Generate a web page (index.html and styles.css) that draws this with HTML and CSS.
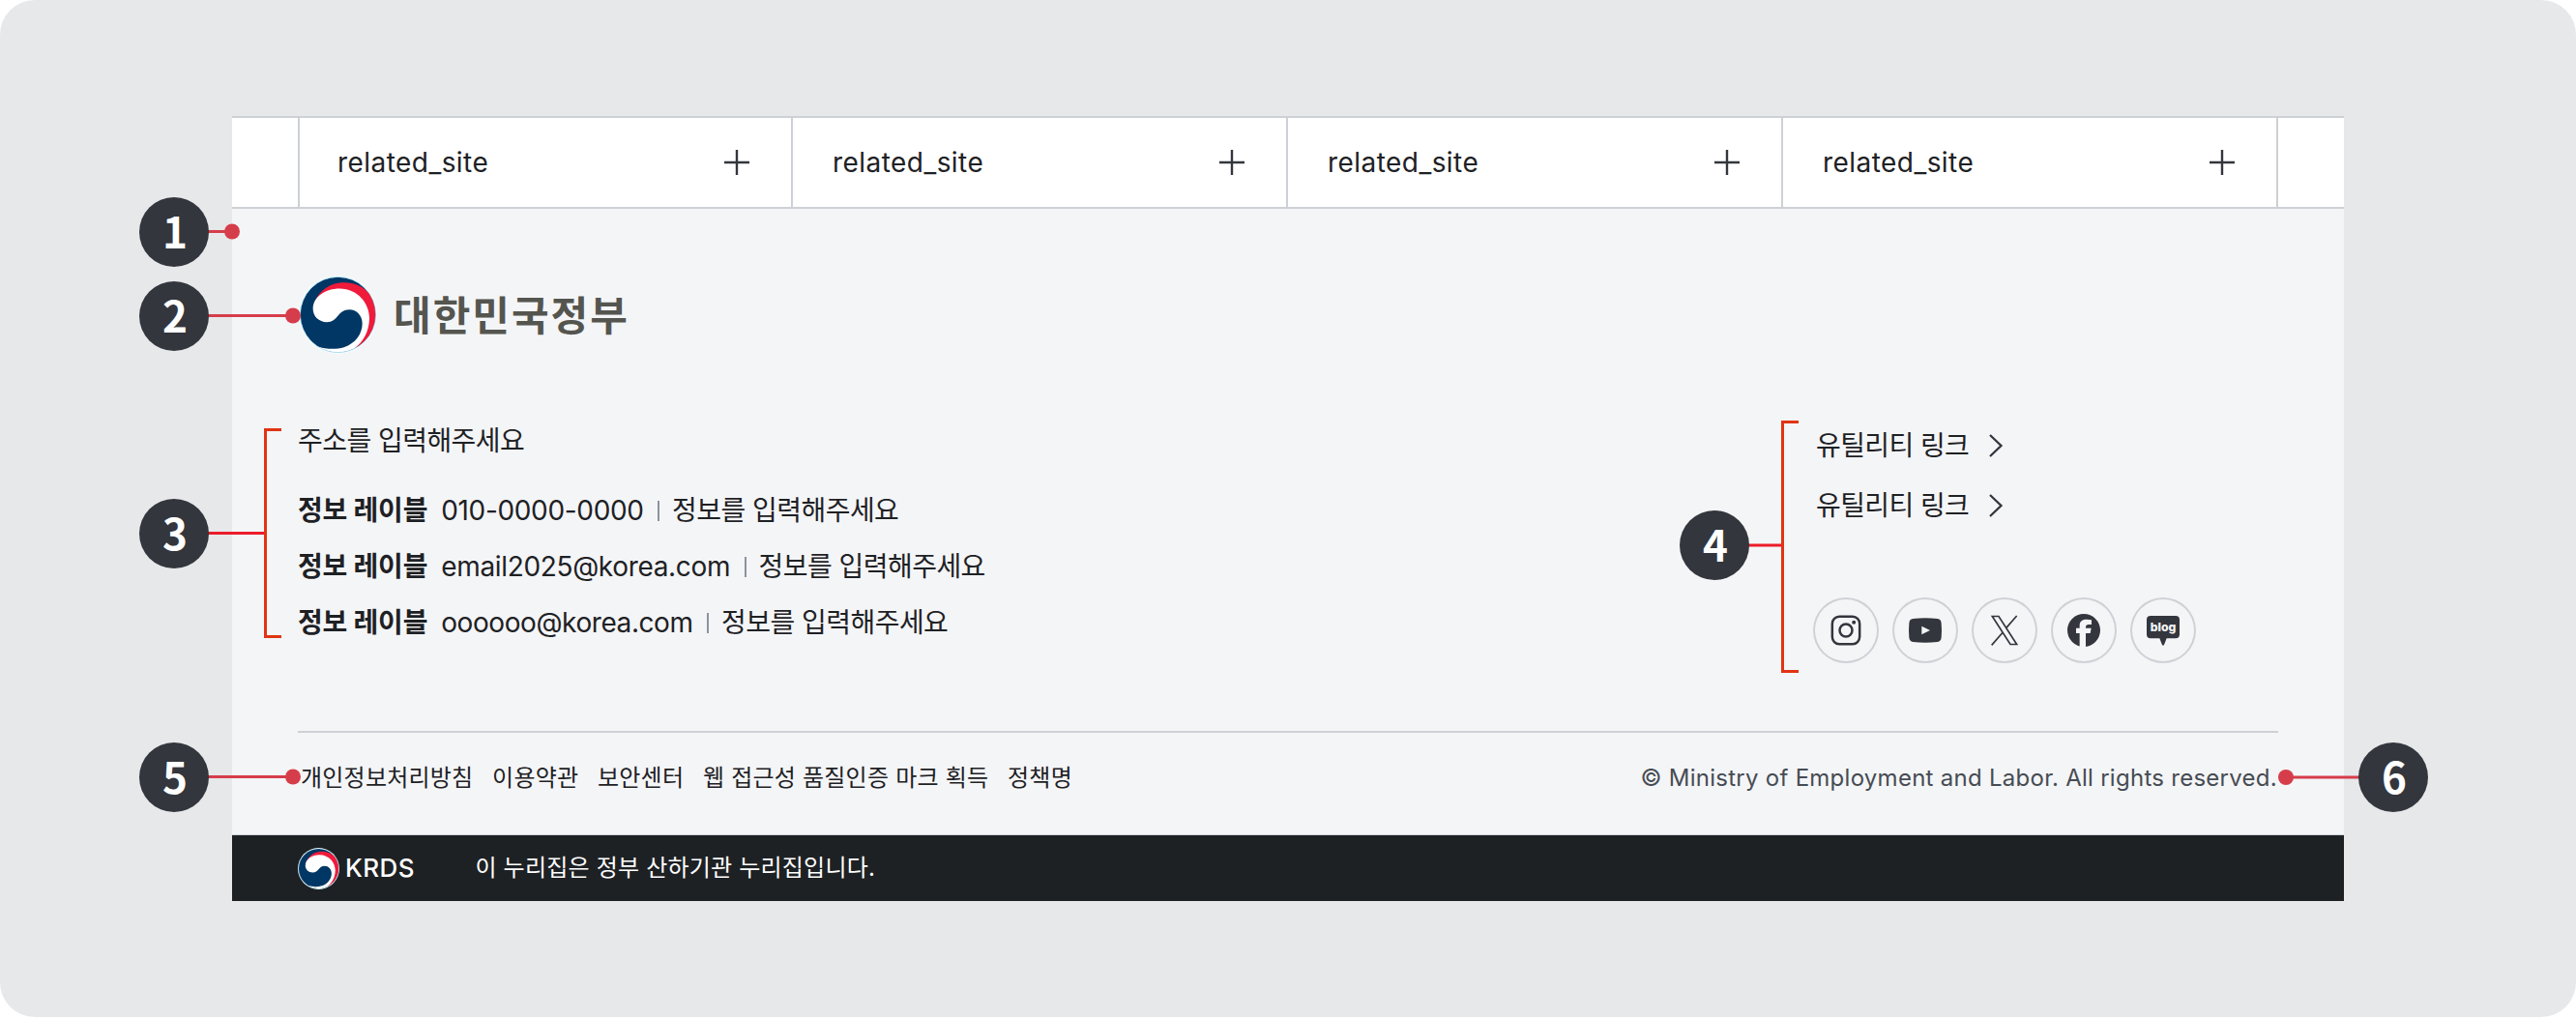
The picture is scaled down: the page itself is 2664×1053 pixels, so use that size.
FILE: index.html
```
<!DOCTYPE html>
<html lang="ko">
<head>
<meta charset="utf-8">
<title>Footer anatomy</title>
<link rel="stylesheet" href="styles.css">
</head>
<body>
<svg class="defs" aria-hidden="true">
  <symbol id="emblem" viewBox="28 41.5 243 243">
    <circle cx="149.500" cy="163" r="121" fill="#fff"/>
    <circle cx="149.500" cy="163" r="116.500" fill="#003764"/>
    <path d="M73 140C82 93 122 63 168 63C202 63 232 77 247 98A117 117 0 0 1 200 268C226 240 240 210 240 175C240 130 205 92 154 92C120 92 90 110 80 140Z" fill="#f01a3b"/>
    <path d="M72 145C72 107 112 82 154 82C212 82 248 130 247 175C246 215 228 248 200 268A117 117 0 0 1 85 261C112 270 142 272 168 264C205 252 225 222 225 190C225 165 207 147 185 147C148 147 150 186 115 186C90 186 72 168 72 145Z" fill="#fff"/>
    <circle cx="149.500" cy="163" r="117.500" fill="none" stroke="#8fd6f2" stroke-width="2"/>
  </symbol>
  <symbol id="plus" viewBox="0 0 40 40"><path d="M20 7v26M7 20h26" fill="none" stroke="#33363d" stroke-width="2.400"/></symbol>
  <symbol id="chevron" viewBox="0 0 16 26"><path d="M2 2l11.500 11L2 24" fill="none" stroke="#33363d" stroke-width="2.300"/></symbol>
</svg>

<div class="canvas">
  <footer class="footer">
    <div class="sites">
      <div class="site"><span>related_site</span><svg class="plus"><use href="#plus"/></svg></div>
      <div class="site"><span>related_site</span><svg class="plus"><use href="#plus"/></svg></div>
      <div class="site"><span>related_site</span><svg class="plus"><use href="#plus"/></svg></div>
      <div class="site"><span>related_site</span><svg class="plus"><use href="#plus"/></svg></div>
    </div>

    <div class="body">
      <div class="brand"><svg class="brand-mark"><use href="#emblem"/></svg><span class="brand-name">대한민국정부</span></div>

      <div class="content">
        <div class="info">
          <p class="address">주소를 입력해주세요</p>
          <p class="row"><b>정보 레이블</b><span class="value">010-0000-0000</span><i class="bar"></i><span class="note">정보를 입력해주세요</span></p>
          <p class="row"><b>정보 레이블</b><span class="value">email2025@korea.com</span><i class="bar"></i><span class="note">정보를 입력해주세요</span></p>
          <p class="row"><b>정보 레이블</b><span class="value tight">oooooo@korea.com</span><i class="bar"></i><span class="note">정보를 입력해주세요</span></p>
        </div>
        <div class="links">
          <a class="util"><span>유틸리티 링크</span><svg class="chevron"><use href="#chevron"/></svg></a>
          <a class="util"><span>유틸리티 링크</span><svg class="chevron"><use href="#chevron"/></svg></a>
          <div class="socials">
            <a class="social"><svg viewBox="-102 -102 204 204"><g fill="none" stroke="#33363d" stroke-width="7.500"><rect x="-42.500" y="-42.500" width="85" height="85" rx="22"/><circle r="19.500"/></g><circle cx="24.500" cy="-24.500" r="6" fill="#33363d"/></svg></a>
            <a class="social"><svg viewBox="-102 -102 204 204"><path d="M-38-36Q0-40 38-36Q49-35 50-22Q52 0 50 22Q49 35 38 36Q0 40-38 36Q-49 35-50 22Q-52 0-50-22Q-49-35-38-36Z" fill="#33363d"/><path d="M-11-13L15 0L-11 13Z" fill="#f4f5f7"/></svg></a>
            <a class="social"><svg viewBox="-102 -102 204 204"><path d="M-38-43.500H-18L38 43.500H18ZM38-45L5-7M-40 46L-5 6" fill="none" stroke="#33363d" stroke-width="5"/></svg></a>
            <a class="social"><svg viewBox="-102 -102 204 204"><circle r="51" fill="#33363d"/><path d="M-13 52V9H-24V-7H-13V-15C-13-29-4-34 9-34Q17-34 24-32V-18H15Q6-18 6-10V-7H23L20 9H6V52Z" fill="#f4f5f7"/></svg></a>
            <a class="social"><svg viewBox="-102 -102 204 204"><path d="M-39-45H39Q51-45 51-33V13Q51 25 39 25H11L3 45Q0 49-3 45L-11 25H-39Q-51 25-51 13V-33Q-51-45-39-45Z" fill="#33363d"/><text class="blog" x="0" y="4" textLength="80" lengthAdjust="spacingAndGlyphs">blog</text></svg></a>
          </div>
        </div>
      </div>

      <div class="legal">
        <div class="policies"><a>개인정보처리방침</a><a>이용약관</a><a>보안센터</a><a>웹 접근성 품질인증 마크 획득</a><a>정책명</a></div>
        <div class="copyright">© Ministry of Employment and Labor. All rights reserved.</div>
      </div>
    </div>

    <div class="identifier">
      <svg class="id-mark"><use href="#emblem"/></svg>
      <span class="id-name">KRDS</span>
      <span class="id-text">이 누리집은 정부 산하기관 누리집입니다.</span>
    </div>
  </footer>

  <svg class="leaders" viewBox="0 0 2664 1053" fill="none">
    <g stroke="#d63d4a" stroke-width="3"><path d="M210 239.500H240M210 326.500H303M210 803.500H303M2364 804H2450"/></g>
    <g fill="#d63d4a"><circle cx="240" cy="239.500" r="8"/><circle cx="303" cy="326.500" r="8"/><circle cx="303" cy="803.500" r="8"/><circle cx="2364" cy="804" r="8"/></g>
    <path d="M210 551.500H273M1800 564H1842" stroke="#ec1c2a" stroke-width="3"/>
    <path d="M291 444.500H274.500V658.500H291M1860 436.500H1843.500V694.500H1860" stroke="#e03413" stroke-width="3"/>
  </svg>
  <span class="badge b1">1</span>
  <span class="badge b2">2</span>
  <span class="badge b3">3</span>
  <span class="badge b4">4</span>
  <span class="badge b5">5</span>
  <span class="badge b6">6</span>
</div>
</body>
</html>
```
FILE: styles.css
```
* { box-sizing: border-box; }
body {
  margin: 0;
  background: #fff;
  color: #1e2124;
  font: 400 28px/40px Inter, "Noto Sans CJK KR", sans-serif;
}
p { margin: 0; }
svg { display: block; flex: none; }
.defs { position: absolute; width: 0; height: 0; }

.canvas {
  position: relative;
  height: 1052px;
  padding: 120px 240px;
  border-radius: 36px;
  background: #e6e8ea;
}
.footer { width: 2184px; background: #f4f5f7; white-space: nowrap; }

.sites {
  display: flex;
  height: 96px;
  padding: 0 68px;
  background: #fff;
  border-top: 2px solid #cdd1d5;
  border-bottom: 2px solid #cdd1d5;
}
.site {
  display: flex;
  align-items: center;
  justify-content: space-between;
  width: 512px;
  padding: 0 36px 0 41px;
  border-right: 2px solid #cdd1d5;
  letter-spacing: 0.45px;
}
.site:first-child { border-left: 2px solid #cdd1d5; padding-left: 39px; }
.plus { width: 40px; height: 40px; }

.body { height: 648px; padding: 68px 68px 0; border-bottom: 1px solid #cdd1d5; }
.brand { display: flex; align-items: center; gap: 17px; height: 82px; }
.brand-mark { width: 81px; height: 81px; margin-left: 1px; }
.brand-name {
  padding-bottom: 2px;
  color: #555550;
  font: 700 42px/60px "Noto Sans CJK KR", sans-serif;
  letter-spacing: 2px;
}

.content {
  display: flex;
  justify-content: space-between;
  height: 320px;
  margin-top: 70px;
}
.address, .note { letter-spacing: -0.55px; }
.address { margin-bottom: 32px; }
.row { display: flex; align-items: center; height: 40px; margin-bottom: 18px; }
.row b { letter-spacing: -0.2px; }
.value { margin-left: 14px; letter-spacing: -0.34px; }
.value.tight { letter-spacing: -0.42px; }
.bar { width: 2px; height: 21px; margin: 0 13px 0 14.5px; background: #8a949e; }

.links { width: 482px; padding-top: 5px; }
.util { display: flex; align-items: center; height: 40px; margin: 0 0 21.5px 4px; letter-spacing: -0.6px; }
.chevron { width: 16px; height: 26px; margin-left: 19.5px; }
.socials { display: flex; gap: 14px; padding-top: 54px; margin-left: 0.5px; }
.social { width: 68px; height: 68px; border-radius: 50%; box-shadow: inset 0 0 0 2px #cfd1d6; }
.blog { fill: #f4f5f7; font: 800 37px Inter, sans-serif; text-anchor: middle; }

.legal {
  display: flex;
  justify-content: space-between;
  padding: 29px 1px 0 3px;
  border-top: 2px solid #cdd1d5;
  font-size: 24px;
  line-height: 36px;
}
.policies { display: flex; gap: 19.7px; letter-spacing: 0.22px; }
.copyright { color: #464c53; letter-spacing: 0.27px; }

.identifier {
  display: flex;
  align-items: center;
  height: 68px;
  padding: 0 68px;
  background: #1e2124;
  color: #fff;
}
.id-mark { width: 43px; height: 43px; }
.id-name { margin-left: 6px; font-size: 26px; font-weight: 500; letter-spacing: 0.4px; }
.id-text { margin-left: 62.5px; font-size: 24px; letter-spacing: 0.2px; }

.leaders { position: absolute; left: 0; top: 0; width: 2664px; height: 1053px; }
.badge {
  position: absolute;
  width: 72px;
  height: 72px;
  padding-left: 2px;
  border-radius: 50%;
  background: #33363d;
  color: #fff;
  font: 700 44px/69px "Noto Sans CJK KR", sans-serif;
  text-align: center;
}
.b1 { left: 144px; top: 203.5px; }
.b2 { left: 144px; top: 290.5px; }
.b3 { left: 144px; top: 515.5px; }
.b4 { left: 1737px; top: 528px; }
.b5 { left: 144px; top: 767.5px; }
.b6 { left: 2439px; top: 768px; }
```
